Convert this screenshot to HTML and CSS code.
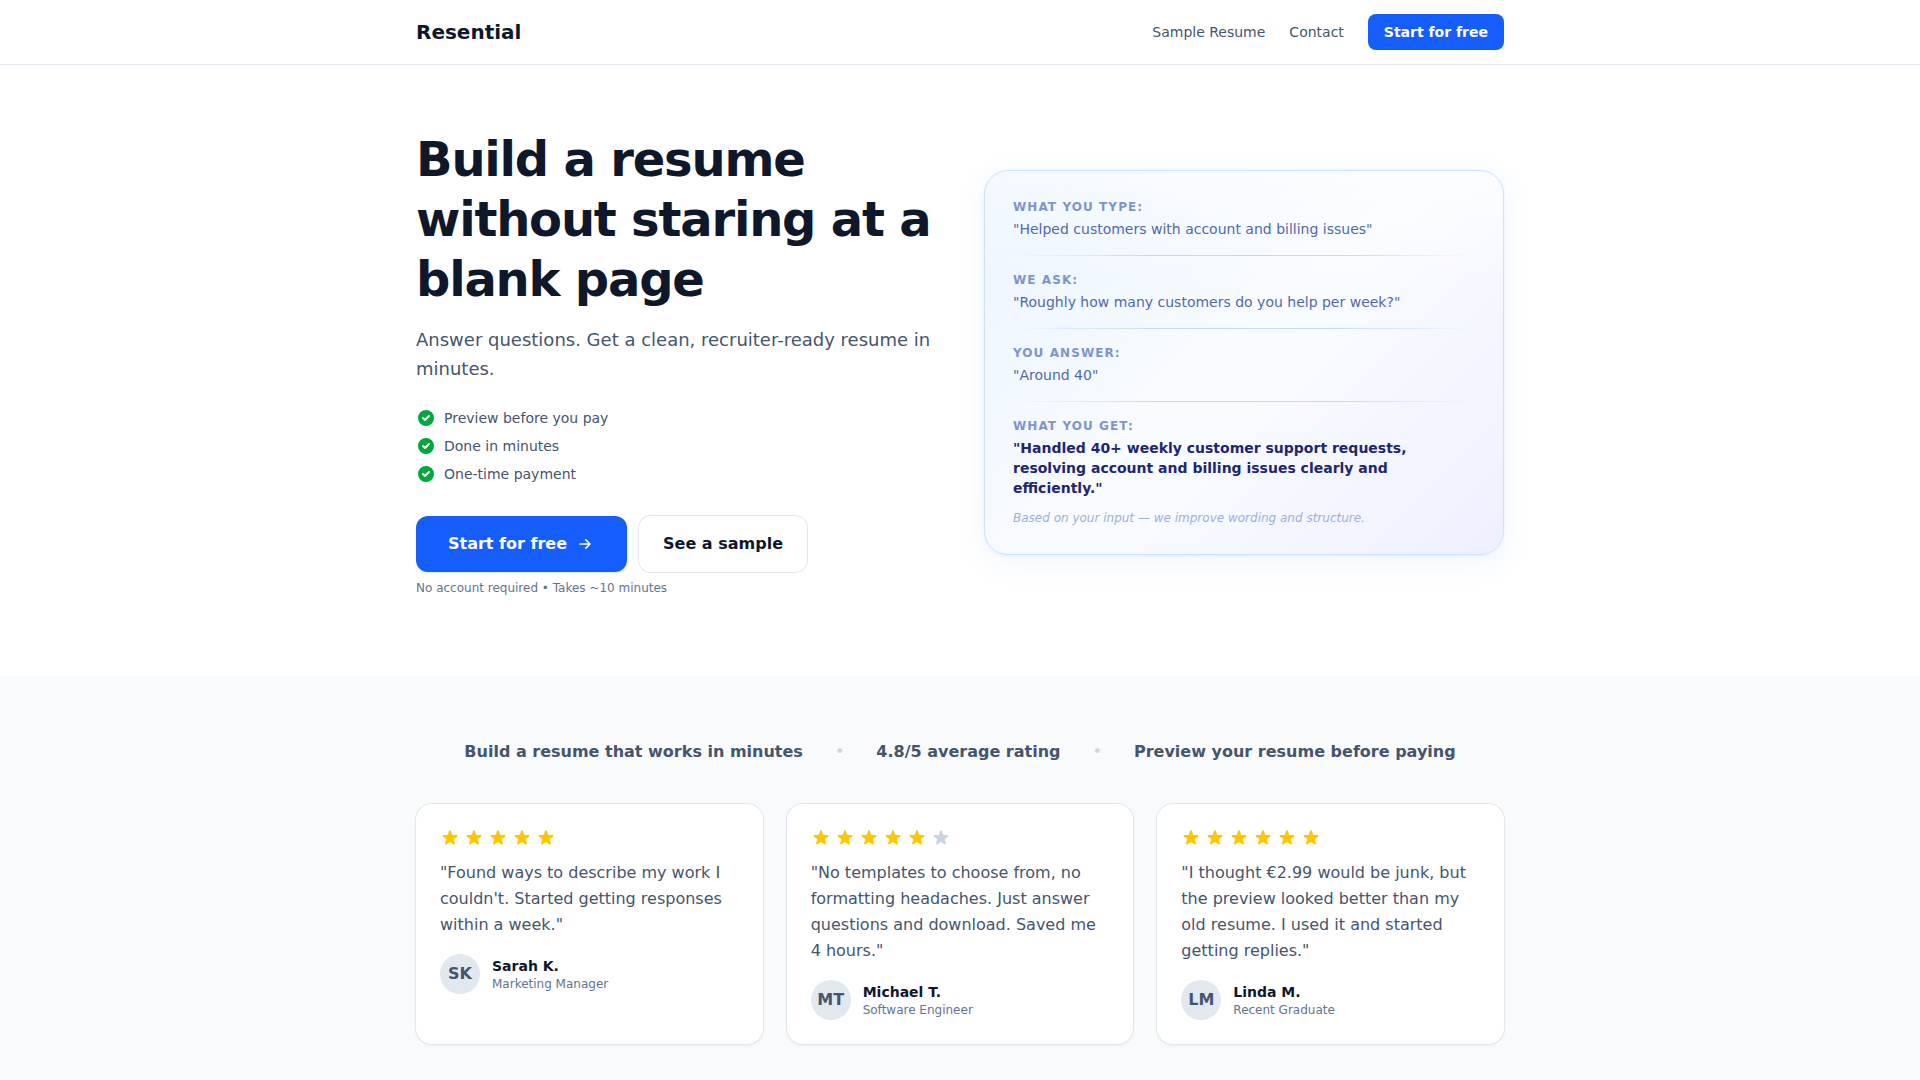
FILE: index.html
```html
<!DOCTYPE html>
<html lang="en">
<head>
  <meta charset="utf-8">
  <meta name="viewport" content="width=device-width, initial-scale=1">
  <title>Resential</title>
  <link rel="stylesheet" href="styles.css">
</head>
<body>
  <svg class="sprite" aria-hidden="true">
    <symbol id="star" viewBox="0 0 20 20">
      <path d="M9.049 2.927c.3-.921 1.603-.921 1.902 0l1.07 3.292a1 1 0 00.95.69h3.462c.969 0 1.371 1.24.588 1.81l-2.8 2.034a1 1 0 00-.364 1.118l1.07 3.292c.3.921-.755 1.688-1.54 1.118l-2.8-2.034a1 1 0 00-1.175 0l-2.8 2.034c-.784.57-1.838-.197-1.539-1.118l1.07-3.292a1 1 0 00-.364-1.118L2.98 8.72c-.783-.57-.38-1.81.588-1.81h3.461a1 1 0 00.951-.69l1.07-3.292z"/>
    </symbol>
    <symbol id="check" viewBox="0 0 20 20">
      <path fill-rule="evenodd" d="M10 18a8 8 0 100-16 8 8 0 000 16zm3.707-9.293a1 1 0 00-1.414-1.414L9 10.586 7.707 9.293a1 1 0 00-1.414 1.414l2 2a1 1 0 001.414 0l4-4z" clip-rule="evenodd"/>
    </symbol>
  </svg>

  <header class="site-header">
    <div class="container header-row">
      <a class="logo" href="#">Resential</a>
      <nav class="nav">
        <a class="nav-link" href="#sample">Sample Resume</a>
        <a class="nav-link" href="#contact">Contact</a>
        <button class="btn btn-small" type="button">Start for free</button>
      </nav>
    </div>
  </header>

  <main>
    <section class="container hero">
      <div class="hero-copy">
        <h1 class="hero-title">Build a resume without staring at a blank page</h1>
        <p class="hero-lead">Answer questions. Get a clean, recruiter-ready resume in minutes.</p>
        <ul class="benefits">
          <li class="benefit"><svg class="check"><use href="#check"/></svg>Preview before you pay</li>
          <li class="benefit"><svg class="check"><use href="#check"/></svg>Done in minutes</li>
          <li class="benefit"><svg class="check"><use href="#check"/></svg>One-time payment</li>
        </ul>
        <div class="actions">
          <button class="btn btn-primary" type="button">Start for free
            <svg class="arrow" viewBox="0 0 24 24" fill="none" stroke="currentColor" stroke-width="2" stroke-linecap="round" stroke-linejoin="round"><path d="M13 7l5 5m0 0l-5 5m5-5H6"/></svg>
          </button>
          <button class="btn btn-outline" type="button">See a sample</button>
        </div>
        <p class="hero-note">No account required • Takes ~10 minutes</p>
      </div>

      <div class="demo">
        <div class="step">
          <p class="step-label">What you type:</p>
          <p class="step-text">"Helped customers with account and billing issues"</p>
        </div>
        <hr class="rule">
        <div class="step">
          <p class="step-label">We ask:</p>
          <p class="step-text">"Roughly how many customers do you help per week?"</p>
        </div>
        <hr class="rule">
        <div class="step">
          <p class="step-label">You answer:</p>
          <p class="step-text">"Around 40"</p>
        </div>
        <hr class="rule">
        <div class="step">
          <p class="step-label">What you get:</p>
          <p class="step-result">"Handled 40+ weekly customer support requests, resolving account and billing issues clearly and efficiently."</p>
          <p class="step-note">Based on your input — we improve wording and structure.</p>
        </div>
      </div>
    </section>

    <section class="proof">
      <div class="container">
        <div class="facts">
          <span>Build a resume that works in minutes</span>
          <span class="dot">•</span>
          <span>4.8/5 average rating</span>
          <span class="dot">•</span>
          <span>Preview your resume before paying</span>
        </div>
        <div class="reviews">
          <article class="review">
            <div class="stars">
              <svg class="star"><use href="#star"/></svg><svg class="star"><use href="#star"/></svg><svg class="star"><use href="#star"/></svg><svg class="star"><use href="#star"/></svg><svg class="star"><use href="#star"/></svg>
            </div>
            <p class="quote">"Found ways to describe my work I couldn't. Started getting responses within a week."</p>
            <div class="author">
              <span class="avatar">SK</span>
              <div>
                <p class="author-name">Sarah K.</p>
                <p class="author-role">Marketing Manager</p>
              </div>
            </div>
          </article>
          <article class="review">
            <div class="stars">
              <svg class="star"><use href="#star"/></svg><svg class="star"><use href="#star"/></svg><svg class="star"><use href="#star"/></svg><svg class="star"><use href="#star"/></svg><svg class="star"><use href="#star"/></svg><svg class="star star-empty"><use href="#star"/></svg>
            </div>
            <p class="quote">"No templates to choose from, no formatting headaches. Just answer questions and download. Saved me 4 hours."</p>
            <div class="author">
              <span class="avatar">MT</span>
              <div>
                <p class="author-name">Michael T.</p>
                <p class="author-role">Software Engineer</p>
              </div>
            </div>
          </article>
          <article class="review">
            <div class="stars">
              <svg class="star"><use href="#star"/></svg><svg class="star"><use href="#star"/></svg><svg class="star"><use href="#star"/></svg><svg class="star"><use href="#star"/></svg><svg class="star"><use href="#star"/></svg><svg class="star"><use href="#star"/></svg>
            </div>
            <p class="quote">"I thought €2.99 would be junk, but the preview looked better than my old resume. I used it and started getting replies."</p>
            <div class="author">
              <span class="avatar">LM</span>
              <div>
                <p class="author-name">Linda M.</p>
                <p class="author-role">Recent Graduate</p>
              </div>
            </div>
          </article>
        </div>
      </div>
    </section>
  </main>
</body>
</html>
```

FILE: styles.css
```css
*,
*::before,
*::after {
  box-sizing: border-box;
}

body {
  margin: 0;
  background: #fff;
  color: #0f172b;
  font-family: "DejaVu Sans", sans-serif;
  font-size: 16px;
  line-height: 24px;
}

h1,
p,
ul {
  margin: 0;
  padding: 0;
}

a {
  color: inherit;
  text-decoration: none;
}

.sprite {
  display: none;
}

.container {
  max-width: 1152px;
  margin: 0 auto;
  padding: 0 32px;
}

/* Header */
.site-header {
  border-bottom: 1px solid #e2e8f0;
}

.header-row {
  display: flex;
  align-items: center;
  justify-content: space-between;
  min-height: 64px;
}

.logo {
  font-size: 20px;
  font-weight: 700;
  line-height: 28px;
}

.nav {
  display: flex;
  align-items: center;
  gap: 24px;
}

.nav-link {
  color: #45556c;
  font-size: 14px;
  line-height: 20px;
}

/* Buttons */
.btn {
  display: inline-flex;
  align-items: center;
  gap: 8px;
  border: 0;
  font-family: inherit;
  font-size: 16px;
  font-weight: 600;
  line-height: 24px;
  cursor: pointer;
}

.btn-small {
  padding: 8px 16px;
  border-radius: 8px;
  background: #155dfc;
  color: #fff;
  font-size: 14px;
  line-height: 20px;
}

.btn-primary {
  padding: 16px 32px;
  border-radius: 12px;
  background: #155dfc;
  color: #fff;
  box-shadow: 0 1px 2px rgba(0, 0, 0, 0.1);
}

.btn-outline {
  padding: 16px 24px;
  border-radius: 12px;
  background: #fff;
  box-shadow: 0 0 0 1px #e2e8f0;
  color: #0f172b;
}

.arrow {
  width: 20px;
  height: 20px;
}

/* Hero */
.hero {
  display: grid;
  grid-template-columns: 1fr 1fr;
  align-items: center;
  gap: 48px;
  padding-top: 64px;
  padding-bottom: 80px;
}

.hero-title {
  font-size: 48px;
  font-weight: 700;
  line-height: 60px;
  letter-spacing: -0.025em;
}

.hero-lead {
  margin-top: 16px;
  color: #45556c;
  font-size: 18px;
  line-height: 29px;
}

.benefits {
  display: grid;
  gap: 8px;
  margin-top: 25px;
  list-style: none;
}

.benefit {
  display: flex;
  align-items: center;
  gap: 8px;
  color: #45556c;
  font-size: 14px;
  line-height: 20px;
}

.check {
  width: 20px;
  height: 20px;
  fill: #00a63e;
}

.actions {
  display: flex;
  flex-wrap: wrap;
  align-items: center;
  gap: 12px;
  margin-top: 32px;
}

.hero-note {
  margin-top: 8px;
  color: #62748e;
  font-size: 12px;
  line-height: 16px;
}

/* Demo card */
.demo {
  padding: 28px;
  border: 1px solid #cbe3ff;
  border-radius: 24px;
  background:
    linear-gradient(to bottom, rgba(255, 255, 255, 0.5), rgba(255, 255, 255, 0) 30%),
    linear-gradient(135deg, #ebf4ff 0%, #f9fcff 50%, #eff0ff 100%);
  box-shadow: 0 8px 30px rgba(59, 130, 246, 0.08), 0 1px 3px rgba(59, 130, 246, 0.1);
}

.step-label {
  color: #7d95ce;
  font-size: 12px;
  font-weight: 600;
  line-height: 16px;
  letter-spacing: 0.09em;
  text-transform: uppercase;
}

.step-text,
.step-result {
  margin-top: 4px;
  color: #5069ab;
  font-size: 14px;
  line-height: 20px;
}

.step-result {
  color: #1f2670;
  font-weight: 600;
}

.step-note {
  margin-top: 12px;
  color: #9bb0dc;
  font-size: 12px;
  font-style: italic;
  line-height: 16px;
}

.rule {
  height: 1px;
  margin: 16px 0;
  border: 0;
  background: linear-gradient(to right, transparent, #bfdcff 30%, #bfdcff 70%, transparent);
}

/* Social proof */
.proof {
  padding: 64px 0;
  background: #f8fafc;
}

.facts {
  display: flex;
  flex-wrap: wrap;
  justify-content: center;
  column-gap: 32px;
  color: #45556c;
  font-weight: 600;
}

.dot {
  color: #cad5e2;
  font-weight: 400;
}

.reviews {
  display: grid;
  grid-template-columns: repeat(3, 1fr);
  gap: 24px;
  margin-top: 40px;
}

.review {
  padding: 24px;
  border-radius: 16px;
  background: #fff;
  box-shadow: 0 0 0 1px #e2e8f0, 0 1px 3px rgba(0, 0, 0, 0.1);
}

.stars {
  display: flex;
  gap: 4px;
}

.star {
  width: 20px;
  height: 20px;
  fill: #fdc700;
}

.star-empty {
  fill: #cad5e2;
}

.quote {
  margin-top: 12px;
  color: #45556c;
  line-height: 26px;
}

.author {
  display: flex;
  align-items: center;
  gap: 12px;
  margin-top: 16px;
}

.avatar {
  display: flex;
  align-items: center;
  justify-content: center;
  width: 40px;
  height: 40px;
  border-radius: 50%;
  background: #e2e8f0;
  color: #45556c;
  font-weight: 600;
}

.author-name {
  font-size: 14px;
  font-weight: 600;
  line-height: 20px;
}

.author-role {
  color: #62748e;
  font-size: 12px;
  line-height: 16px;
}
```
